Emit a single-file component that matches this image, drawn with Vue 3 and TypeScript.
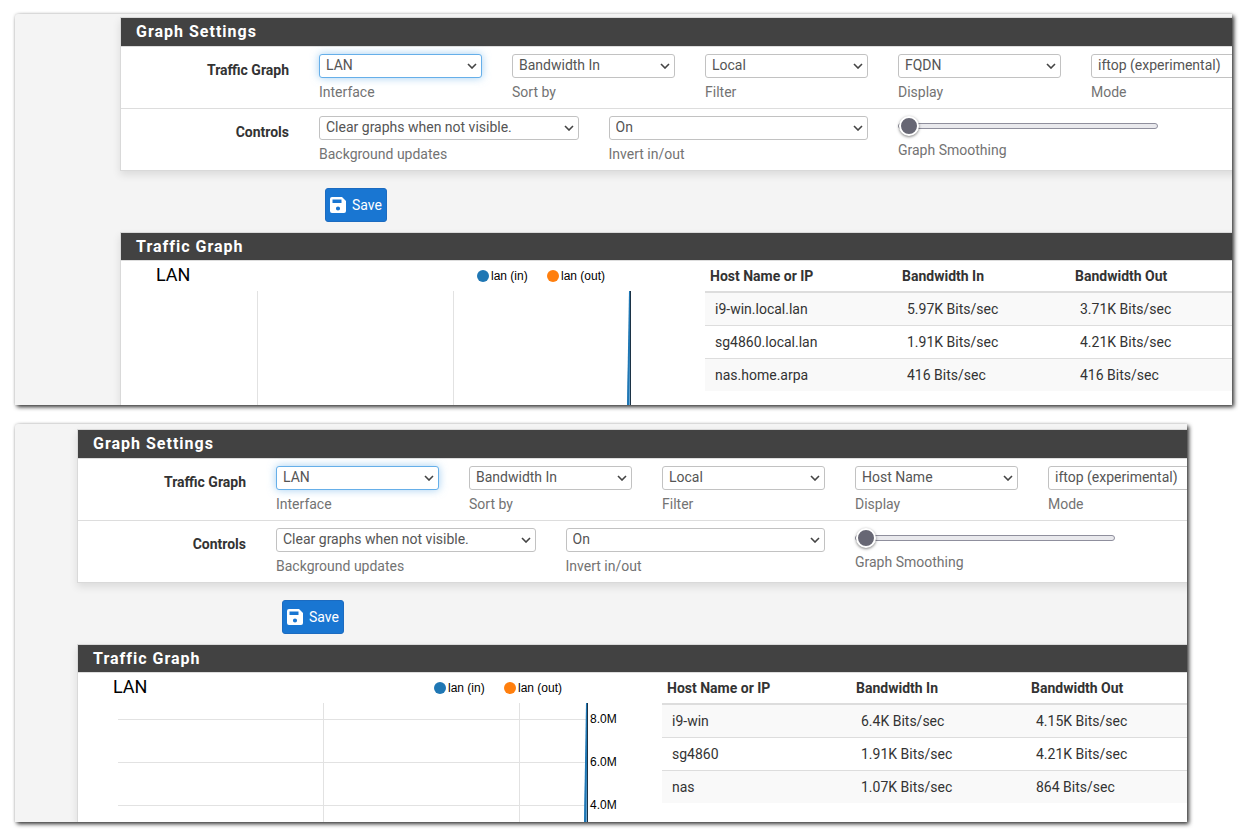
<script setup lang="ts">
import { reactive } from 'vue'

interface Field {
  id: string
  caption: string
  value: string
  options: string[]
  focused?: boolean
}

interface HostRow {
  host: string
  inbound: string
  outbound: string
}

interface Shot {
  id: string
  size: 'wide' | 'narrow'
  filters: Field[]
  controls: Field[]
  smoothing: number
  chartHeight: number
  verticals: number[]
  ticks: { y: number; text: string }[]
  rows: HostRow[]
}

function filtersFor(display: string): Field[] {
  return [
    { id: 'if', caption: 'Interface', value: 'LAN', options: ['LAN', 'WAN'], focused: true },
    { id: 'sort', caption: 'Sort by', value: 'Bandwidth In', options: ['Bandwidth In', 'Bandwidth Out'] },
    { id: 'filter', caption: 'Filter', value: 'Local', options: ['Local', 'Remote', 'All'] },
    { id: 'display', caption: 'Display', value: display, options: ['IP Address', 'Host Name', 'Description', 'FQDN'] },
    { id: 'mode', caption: 'Mode', value: 'iftop (experimental)', options: ['rate', 'iftop (experimental)'] },
  ]
}

function controlsFor(): Field[] {
  return [
    {
      id: 'background',
      caption: 'Background updates',
      value: 'Clear graphs when not visible.',
      options: ['Clear graphs when not visible.', 'Keep graphs updated on inactive tab.'],
    },
    { id: 'invert', caption: 'Invert in/out', value: 'On', options: ['On', 'Off'] },
  ]
}

const shots = reactive<Shot[]>([
  {
    id: 'fqdn',
    size: 'wide',
    filters: filtersFor('FQDN'),
    controls: controlsFor(),
    smoothing: 0,
    chartHeight: 144,
    verticals: [136, 332],
    ticks: [],
    rows: [
      { host: 'i9-win.local.lan', inbound: '5.97K Bits/sec', outbound: '3.71K Bits/sec' },
      { host: 'sg4860.local.lan', inbound: '1.91K Bits/sec', outbound: '4.21K Bits/sec' },
      { host: 'nas.home.arpa', inbound: '416 Bits/sec', outbound: '416 Bits/sec' },
    ],
  },
  {
    id: 'hostname',
    size: 'narrow',
    filters: filtersFor('Host Name'),
    controls: controlsFor(),
    smoothing: 0,
    chartHeight: 149,
    verticals: [245, 441],
    ticks: [
      { y: 46, text: '8.0M' },
      { y: 89, text: '6.0M' },
      { y: 132, text: '4.0M' },
    ],
    rows: [
      { host: 'i9-win', inbound: '6.4K Bits/sec', outbound: '4.15K Bits/sec' },
      { host: 'sg4860', inbound: '1.91K Bits/sec', outbound: '4.21K Bits/sec' },
      { host: 'nas', inbound: '1.07K Bits/sec', outbound: '864 Bits/sec' },
    ],
  },
])
</script>

<template>
  <main class="page">
    <section v-for="shot in shots" :key="shot.id" class="shot" :class="shot.size">
      <form class="content" @submit.prevent>
        <section class="panel">
          <h2 class="panel-title">Graph Settings</h2>
          <div class="row" role="group" :aria-labelledby="shot.id + '-graph'">
            <span :id="shot.id + '-graph'" class="row-label">Traffic Graph</span>
            <div v-for="field in shot.filters" :key="field.id" class="field">
              <select
                :id="shot.id + '-' + field.id"
                v-model="field.value"
                class="select"
                :class="{ focused: field.focused }"
              >
                <option v-for="option in field.options" :key="option">{{ option }}</option>
              </select>
              <label class="caption" :for="shot.id + '-' + field.id">{{ field.caption }}</label>
            </div>
          </div>
          <div class="row" role="group" :aria-labelledby="shot.id + '-controls'">
            <span :id="shot.id + '-controls'" class="row-label">Controls</span>
            <div v-for="field in shot.controls" :key="field.id" class="field large">
              <select :id="shot.id + '-' + field.id" v-model="field.value" class="select">
                <option v-for="option in field.options" :key="option">{{ option }}</option>
              </select>
              <label class="caption" :for="shot.id + '-' + field.id">{{ field.caption }}</label>
            </div>
            <div class="field large">
              <input
                :id="shot.id + '-smoothing'"
                v-model.number="shot.smoothing"
                class="range"
                type="range"
                min="0"
                max="5"
              />
              <label class="caption" :for="shot.id + '-smoothing'">Graph Smoothing</label>
            </div>
          </div>
        </section>

        <div class="actions">
          <button class="save" type="submit">
            <svg width="16" height="16" viewBox="0 0 16 16" aria-hidden="true">
              <path
                fill="#fff"
                fill-rule="evenodd"
                d="M2 0H12L16 4V14Q16 16 14 16H2Q0 16 0 14V2Q0 0 2 0ZM2.5 2.5V6H11.5V2.5ZM8 9.4A2.1 2.1 0 1 0 8 13.6A2.1 2.1 0 1 0 8 9.4Z"
              />
            </svg>
            Save
          </button>
        </div>

        <section class="panel graph-panel">
          <h2 class="panel-title">Traffic Graph</h2>
          <div class="graph-body">
            <svg class="chart" :height="shot.chartHeight" role="img" aria-label="LAN traffic">
              <text class="chart-title" x="35" y="20">LAN</text>
              <circle cx="362" cy="15" r="6" fill="#1f77b4" />
              <text class="chart-text" x="370" y="19">lan (in)</text>
              <circle cx="432" cy="15" r="6" fill="#ff7f0e" />
              <text class="chart-text" x="440" y="19">lan (out)</text>
              <g class="grid">
                <rect v-for="x in shot.verticals" :key="x" :x="x" y="30" width="1" :height="shot.chartHeight - 30" />
                <rect v-for="tick in shot.ticks" :key="tick.y" x="40" :y="tick.y" width="468" height="1" />
              </g>
              <path :d="`M509 30 L506 ${shot.chartHeight} H509 Z`" fill="#6fa8d2" />
              <path :d="`M509 30 L507 ${shot.chartHeight}`" stroke="#1f77b4" stroke-width="2" />
              <rect x="509" y="30" width="1" :height="shot.chartHeight - 30" fill="#1c3346" />
              <text v-for="tick in shot.ticks" :key="tick.text" class="chart-text" x="512" :y="tick.y + 4">
                {{ tick.text }}
              </text>
            </svg>
            <div class="hosts">
              <table>
                <colgroup>
                  <col class="col-host" />
                  <col class="col-in" />
                  <col />
                </colgroup>
                <thead>
                  <tr>
                    <th scope="col">Host Name or IP</th>
                    <th scope="col">Bandwidth In</th>
                    <th scope="col">Bandwidth Out</th>
                  </tr>
                </thead>
                <tbody>
                  <tr v-for="row in shot.rows" :key="row.host">
                    <td>{{ row.host }}</td>
                    <td>{{ row.inbound }}</td>
                    <td>{{ row.outbound }}</td>
                  </tr>
                </tbody>
              </table>
            </div>
          </div>
        </section>
      </form>
    </section>
  </main>
</template>

<style>
body {
  margin: 0;
  background: #fff;
}
</style>

<style scoped>
* {
  box-sizing: border-box;
}

.page {
  display: flex;
  flex-direction: column;
  gap: 19px;
  padding: 14px 16px 16px 15px;
  overflow: hidden;
  font: 14px/20px Roboto, 'Liberation Sans', sans-serif;
  color: #333;
}

.shot {
  overflow: hidden;
  background: #f4f4f4;
  border-radius: 3px 0 0 0;
  box-shadow: 2px 2px 4px rgba(0, 0, 0, 0.8), 0 0 3px rgba(0, 0, 0, 0.15);
}

.wide {
  padding: 3px 0 0 105px;
}

.narrow {
  margin-right: 45px;
  padding: 5px 0 0 62px;
}

/* the settings page runs past the right edge of its frame */
.wide .content {
  margin-right: -38px;
}

.narrow .content {
  margin-right: -40px;
}

.panel {
  background: #fff;
  border: 1px solid #d9d9d9;
  box-shadow: 0 4px 8px rgba(0, 0, 0, 0.1);
}

.panel-title {
  margin: 0;
  padding: 4px 15px;
  background: #424242;
  color: #fff;
  font-size: 16px;
  font-weight: 700;
  line-height: 20px;
  letter-spacing: 1px;
}

.graph-panel {
  border-bottom: 0;
}

.row {
  display: grid;
  grid-template-columns: 183px repeat(10, 1fr);
  padding: 7px 0 6px;
  border-top: 1px solid #ddd;
}

.row-label {
  padding: 6px 15px 0 0;
  font-weight: 700;
  text-align: right;
}

.field {
  grid-column: span 2;
  display: flex;
  flex-direction: column;
  gap: 4px;
  min-width: 0;
  padding: 0 15px;
}

.field.large {
  grid-column: span 3;
}

.select {
  width: 100%;
  height: 24px;
  margin: 0;
  padding: 0 20px 2px 6px;
  border: 1px solid #c2c2c2;
  border-radius: 3px;
  appearance: none;
  background: #fff url("data:image/svg+xml,%3Csvg xmlns='http://www.w3.org/2000/svg' width='10' height='6'%3E%3Cpath d='M1 1 L5 5 L9 1' fill='none' stroke='%23444' stroke-width='1.6'/%3E%3C/svg%3E") no-repeat right 4px center;
  color: #555;
  font: inherit;
}

.select.focused {
  border-color: #66afe9;
  box-shadow: 0 0 8px rgba(102, 175, 233, 0.6);
}

.caption {
  color: #737373;
}

.range {
  width: 100%;
  height: 20px;
  margin: 0;
  appearance: none;
  background: transparent;
}

.range::-webkit-slider-runnable-track {
  height: 6px;
  border: 1px solid #8f8f9d;
  border-radius: 3px;
  background: #e9e9ed;
}

.range::-webkit-slider-thumb {
  width: 20px;
  height: 20px;
  margin-top: -8px;
  appearance: none;
  border: 2px solid #fff;
  border-radius: 50%;
  background: #676774;
  box-shadow: 0 1px 3px rgba(0, 0, 0, 0.5);
}

.actions {
  padding: 17px 0 10px 205px;
}

.save {
  display: flex;
  align-items: center;
  gap: 6px;
  height: 34px;
  padding: 0 4px;
  border: 1px solid #1c6bc0;
  border-radius: 3px;
  background: #1976d2;
  color: #fff;
  font: inherit;
}

.graph-panel .panel-title {
  padding-bottom: 3px;
}

.graph-body {
  display: grid;
  grid-template-columns: 584px 1fr;
  border-top: 1px solid #ddd;
}

.chart {
  display: block;
  width: 100%;
}

.chart-title {
  font-size: 18px;
  fill: #000;
}

.chart-text {
  font: 12px 'Liberation Sans', Arial, sans-serif;
  fill: #000;
}

.grid {
  fill: #e2e2e2;
}

.hosts {
  padding-right: 10px;
}

table {
  width: 100%;
  border-collapse: separate;
  border-spacing: 0;
  table-layout: fixed;
}

.wide .col-host {
  width: 192px;
}

.wide .col-in {
  width: 173px;
}

.narrow .col-host {
  width: 189px;
}

.narrow .col-in {
  width: 175px;
}

th {
  padding: 5px;
  border-bottom: 2px solid #ddd;
  font-weight: 700;
  text-align: left;
}

td {
  padding: 6px 10px;
  border-top: 1px solid #ddd;
}

tbody tr:first-child td {
  border-top: 0;
}

tbody tr:nth-child(odd) {
  background: #f9f9f9;
}
</style>
